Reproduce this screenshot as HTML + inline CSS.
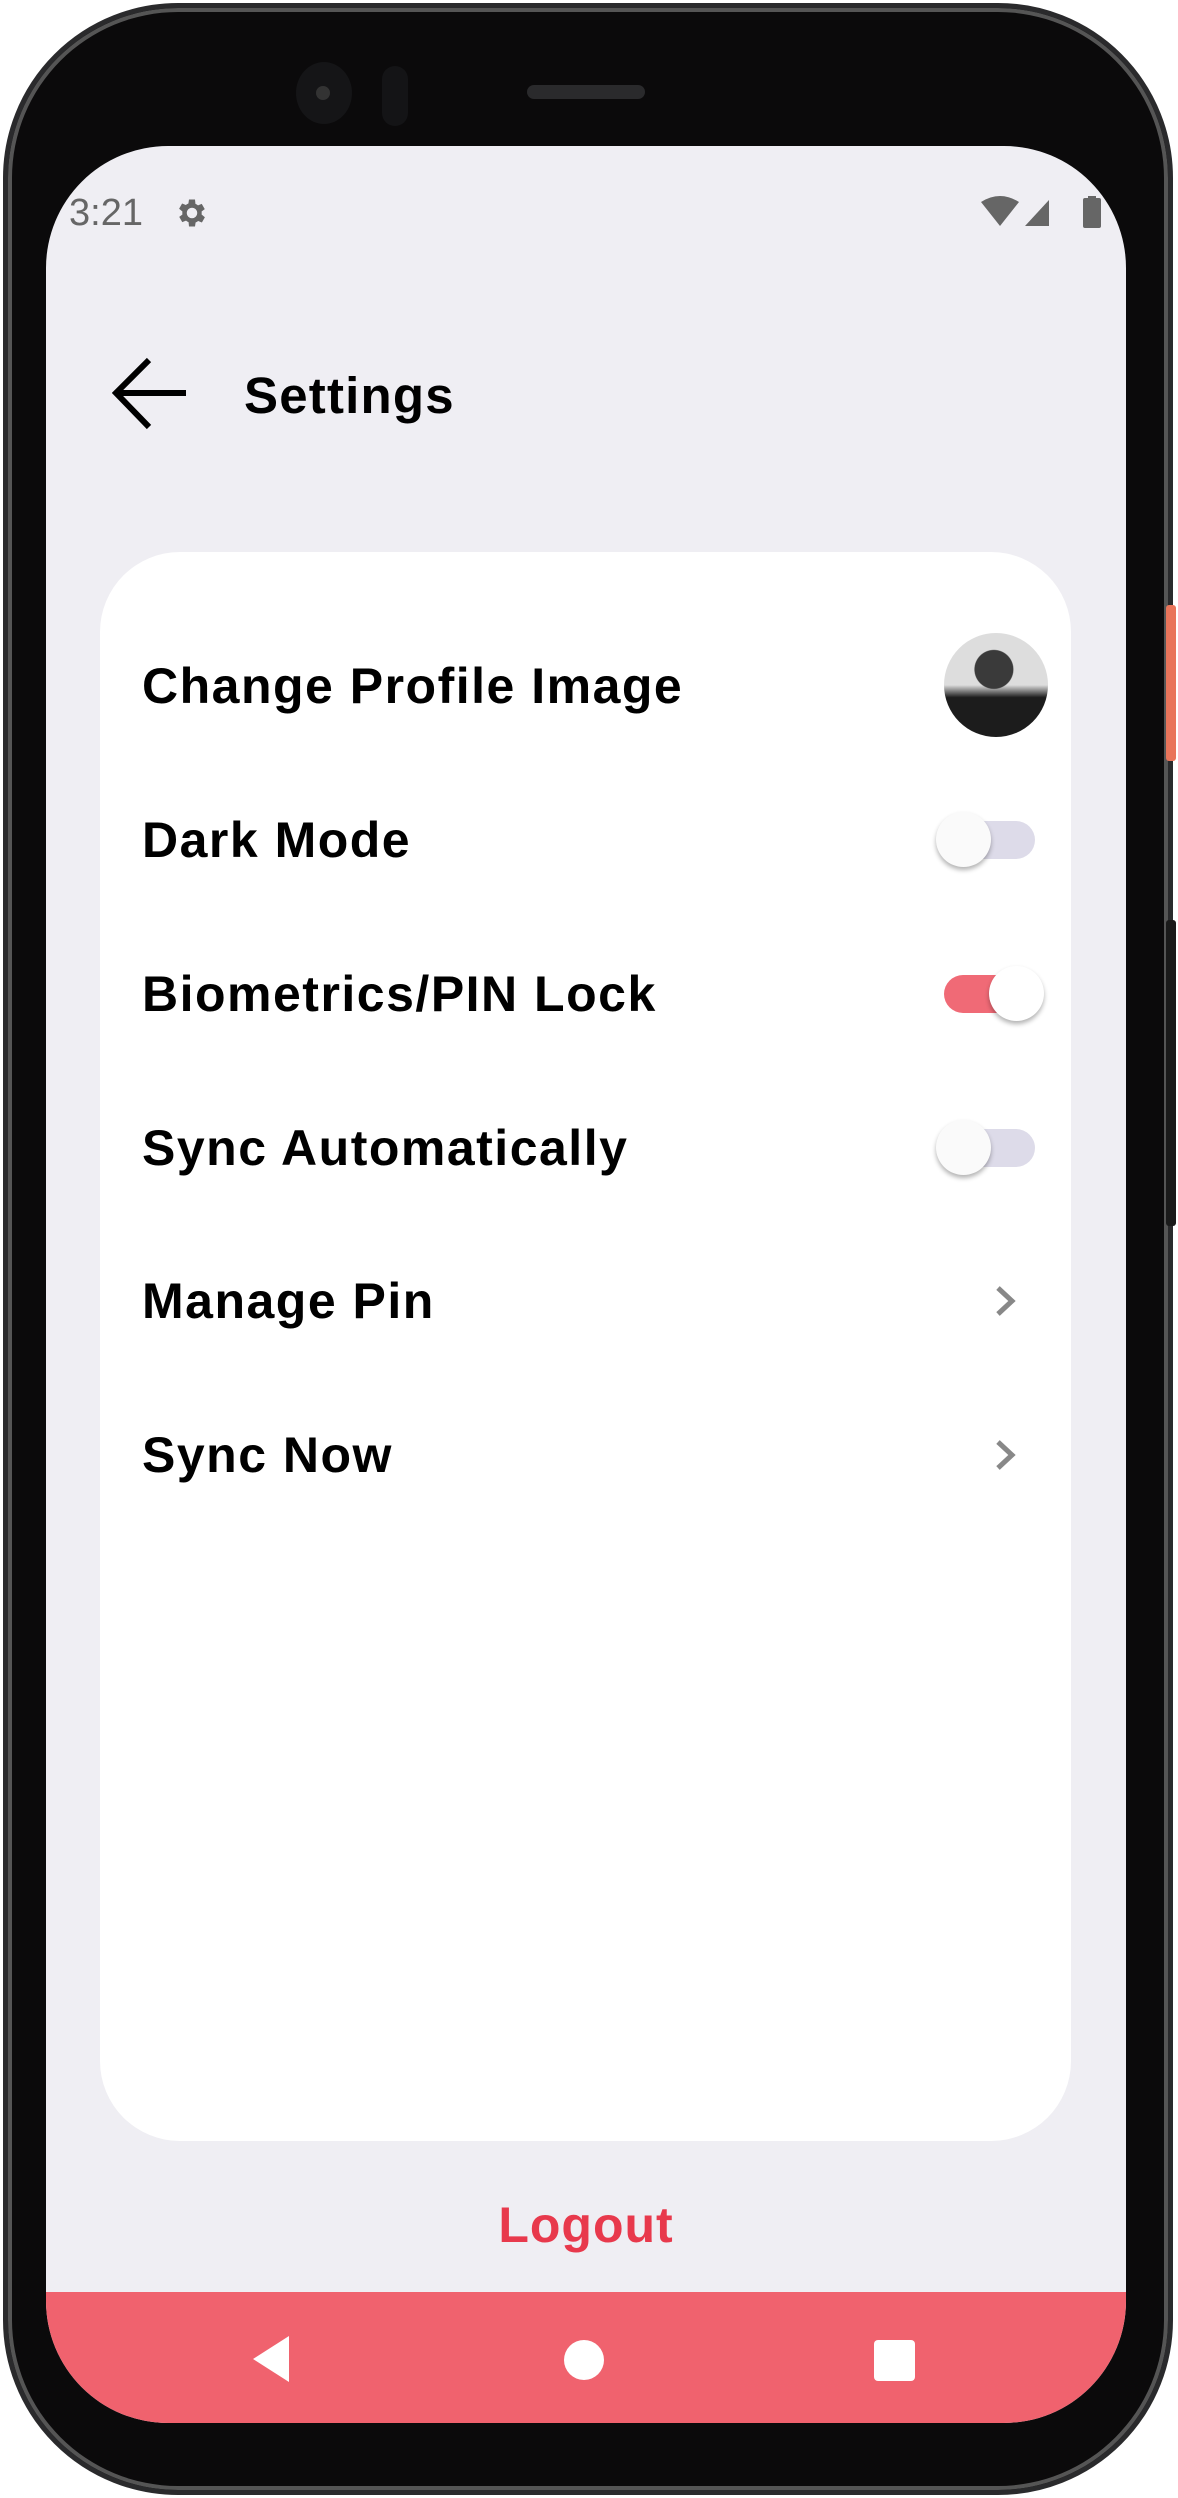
<!DOCTYPE html>
<html><head><meta charset="utf-8"><style>
*{margin:0;padding:0;box-sizing:border-box}
html,body{width:1178px;height:2498px;background:#fff;overflow:hidden;font-family:"Liberation Sans",sans-serif}
.phone{position:absolute;left:3px;top:3px;width:1170px;height:2492px;background:#0b0a0b;border-radius:175px;border:5px solid #2a2a2c;box-shadow:inset 0 0 0 4px #555}
.screen{position:absolute;left:46px;top:146px;width:1080px;height:2277px;background:#efeef3;border-radius:122px;overflow:hidden}
.btn1{position:absolute;left:1166px;top:605px;width:10px;height:156px;background:#e9745a;border-radius:3px}
.btn2{position:absolute;left:1166px;top:920px;width:10px;height:306px;background:#1a1a1a;border-radius:3px}
.abs{position:absolute}
.card{position:absolute;left:54px;top:406px;width:971px;height:1589px;background:#fff;border-radius:80px}
.lbl{position:absolute;left:42px;font-weight:bold;font-size:50px;color:#000;line-height:1;transform:translateY(-50%);letter-spacing:1.5px}
.track{position:absolute;width:91px;height:38px;border-radius:19px;background:#dddbe9}
.knob{position:absolute;width:55px;height:55px;border-radius:50%;background:#fafafa;box-shadow:0 3px 5px rgba(0,0,0,.3)}
.nav{position:absolute;left:0;top:2146px;width:1080px;height:131px;background:#f0626e}
</style></head><body>
<div class="phone"></div>
<div class="btn1"></div><div class="btn2"></div>
<div class="abs" style="left:296px;top:62px;width:56px;height:62px;border-radius:50%;background:#151517"></div>
<div class="abs" style="left:316px;top:86px;width:14px;height:14px;border-radius:50%;background:#333"></div>
<div class="abs" style="left:382px;top:66px;width:26px;height:60px;border-radius:13px;background:#141416"></div>
<div class="abs" style="left:527px;top:85px;width:118px;height:14px;border-radius:7px;background:#2a2a2c"></div>
<div class="screen">
  <div class="abs" style="left:23px;top:46px;font-size:38px;color:#666">3:21</div>
  <svg class="abs" style="left:128px;top:49px" width="36" height="36" viewBox="0 0 24 24"><path fill="#666" d="M19.4 13a7.5 7.5 0 0 0 0-2l2.1-1.6-2-3.5-2.5 1a7 7 0 0 0-1.7-1L15 3h-4l-.4 2.7a7 7 0 0 0-1.7 1l-2.5-1-2 3.5L6.6 11a7.5 7.5 0 0 0 0 2l-2.1 1.6 2 3.5 2.5-1a7 7 0 0 0 1.7 1L11 21h4l.4-2.7a7 7 0 0 0 1.7-1l2.5 1 2-3.5zM13 15.5a3.5 3.5 0 1 1 0-7 3.5 3.5 0 0 1 0 7z" transform="translate(-1 0)"/></svg>
  <svg class="abs" style="left:935px;top:50px" width="130" height="34" viewBox="0 0 130 34"><path fill="#666" d="M0 6 Q19 -6 38 6 L19 30Z"/><path fill="#666" d="M44 30 L68 4 L68 30Z"/><rect x="102" y="2" width="18" height="30" rx="2" fill="#666"/><rect x="107" y="0" width="8" height="4" fill="#666"/></svg>
  <svg class="abs" style="left:66px;top:210px" width="76" height="76" viewBox="0 0 76 76"><path d="M74 37 H6 M37 4 L4 37 L37 71" stroke="#000" stroke-width="6" fill="none"/></svg>
  <div class="abs" style="left:198px;top:220px;font-size:51px;font-weight:bold;color:#000;letter-spacing:1.2px">Settings</div>
  <div class="card">
    <div class="lbl" style="top:134px">Change Profile Image</div>
    <div class="abs" style="left:844px;top:81px;width:104px;height:104px;border-radius:50%;background:radial-gradient(circle at 48% 35%,#3a3a3a 0 22%,transparent 23%),linear-gradient(180deg,#ddd 0 50%,#1c1c1c 62%);overflow:hidden"></div>
    <div class="lbl" style="top:288px">Dark Mode</div>
    <div class="track" style="left:844px;top:269px"></div><div class="knob" style="left:836px;top:260px"></div>
    <div class="lbl" style="top:442px">Biometrics/PIN Lock</div>
    <div class="track" style="left:844px;top:423px;background:#f06a76"></div><div class="knob" style="left:889px;top:414px;background:#fff"></div>
    <div class="lbl" style="top:596px">Sync Automatically</div>
    <div class="track" style="left:844px;top:577px"></div><div class="knob" style="left:836px;top:568px"></div>
    <div class="lbl" style="top:749px">Manage Pin</div>
    <svg class="abs" style="left:894px;top:732px" width="24" height="34" viewBox="0 0 24 34"><path d="M4 4 L18 17 L4 30" stroke="#888" stroke-width="5" fill="none"/></svg>
    <div class="lbl" style="top:903px">Sync Now</div>
    <svg class="abs" style="left:894px;top:886px" width="24" height="34" viewBox="0 0 24 34"><path d="M4 4 L18 17 L4 30" stroke="#888" stroke-width="5" fill="none"/></svg>
  </div>
  <div class="abs" style="left:0;width:1080px;top:2050px;text-align:center;font-size:50px;font-weight:bold;color:#e8394c;letter-spacing:1px">Logout</div>
  <div class="nav">
    <svg class="abs" style="left:205px;top:44px" width="40" height="46" viewBox="0 0 40 46"><path d="M38 0 V46 L2 23Z" fill="#fff"/></svg>
    <div class="abs" style="left:518px;top:48px;width:40px;height:40px;border-radius:50%;background:#fff"></div>
    <div class="abs" style="left:828px;top:48px;width:41px;height:41px;border-radius:4px;background:#fff"></div>
  </div>
</div>
</body></html>
